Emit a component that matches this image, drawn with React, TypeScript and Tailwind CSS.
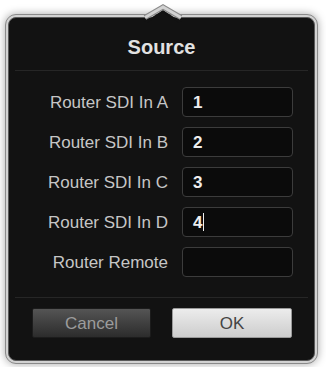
import React from "react";

const rows = [
  { label: "Router SDI In A", value: "1" },
  { label: "Router SDI In B", value: "2" },
  { label: "Router SDI In C", value: "3" },
  { label: "Router SDI In D", value: "4", cursor: true },
  { label: "Router Remote", value: "" },
];

export default function App() {
  return (
    <div
      className="w-[326px] h-[367px] bg-white overflow-hidden pt-[14px] pl-[5px]"
      style={{ fontFamily: '"Liberation Sans", Arial, sans-serif' }}
    >
      <div className="relative w-[313px] h-[350px] rounded-[11px] border border-[#8a8a8a] bg-[#d2d2d2] p-[2px] shadow-[0_0_9px_rgba(0,0,0,0.35)]">
        <svg
          className="absolute left-[139px] top-[-12px] overflow-visible"
          width="36"
          height="22"
          viewBox="0 0 36 22"
        >
          <polygon points="-2,20 18,7 38,20" fill="#121212" />
          <path d="M0,14.5 L18,4 L36,14.5" fill="none" stroke="#8a8a8a" strokeWidth="5" strokeLinejoin="miter" />
          <path d="M0,14.5 L18,4 L36,14.5" fill="none" stroke="#d2d2d2" strokeWidth="3" strokeLinejoin="miter" />
          <polygon points="2,20 18,9.5 34,20" fill="#121212" />
        </svg>
        <div className="w-full h-full rounded-[8px] border border-[#5a5a5a] bg-[#121212] flex flex-col">
          <div className="h-[52px] pt-[6px] flex items-center justify-center text-[20px] font-bold text-[#e2e2e2] leading-none">
            Source
          </div>
          <div className="mx-[6px] h-px bg-[#262626]" />
          <div className="mt-[16px] flex flex-col gap-[10px]">
            {rows.map((r) => (
              <div key={r.label} className="flex items-center h-[30px]">
                <div className="w-[159px] text-right text-[17px] text-[#c6c6c6] leading-none">
                  {r.label}
                </div>
                <div className="ml-[14px] w-[111px] h-[30px] rounded-[4px] border border-[#3c3c3c] bg-[#0b0b0b] flex items-center pl-[10px] text-[17px] font-bold text-[#eeeeee] leading-none">
                  {r.value}
                  {r.cursor && <span className="ml-[1px] w-px h-[18px] bg-[#eeeeee]" />}
                </div>
              </div>
            ))}
          </div>
          <div className="mt-[20px] mx-[6px] h-px bg-[#262626]" />
          <div className="mt-[10px] pl-[23px] flex gap-[21px]">
            <div className="w-[119px] h-[30px] rounded-[2px] border border-[#1c1c1c] bg-gradient-to-b from-[#555555] to-[#2c2c2c] flex items-center justify-center text-[17px] text-[#9c9c9c] leading-none">
              Cancel
            </div>
            <div className="w-[120px] h-[30px] rounded-[2px] border border-[#9a9a9a] bg-gradient-to-b from-[#ececec] to-[#cdcdcd] flex items-center justify-center text-[17px] text-[#444444] leading-none">
              OK
            </div>
          </div>
        </div>
      </div>
    </div>
  );
}
